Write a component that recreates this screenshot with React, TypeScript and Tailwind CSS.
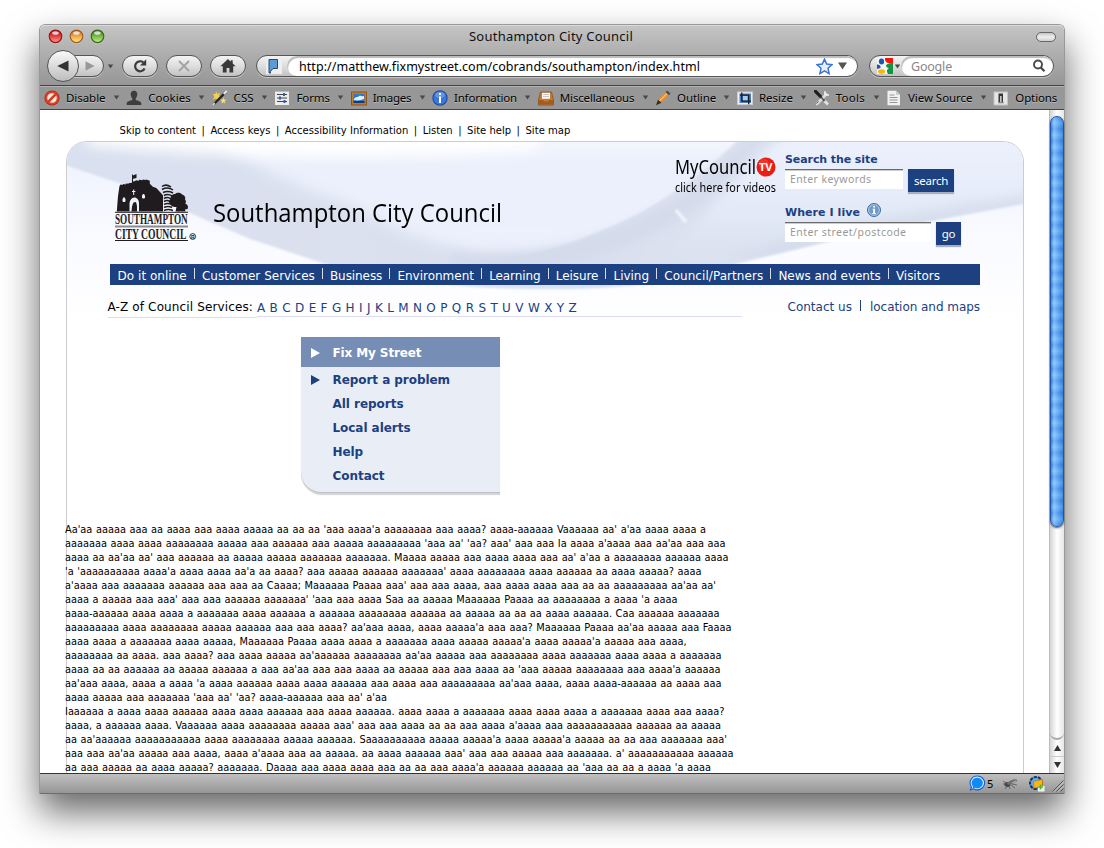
import { useLayoutEffect, useRef, type ReactNode } from "react";

const UI = "font-['Noto_Sans','Open_Sans',sans-serif]";
const WEB = "font-['DejaVu_Sans',sans-serif]";

/* A single line of text set to a given measure, by tracking or by narrowing the glyphs. */
function Fit({ w, className = "", squeeze = false, children }: { w: number; className?: string; squeeze?: boolean; children: string }) {
  const ref = useRef<HTMLSpanElement>(null);
  useLayoutEffect(() => {
    const el = ref.current;
    if (!el) return;
    el.style.letterSpacing = "0px";
    el.style.transform = "none";
    const natural = el.getBoundingClientRect().width;
    if (squeeze) el.style.transform = `scaleX(${w / natural})`;
    else el.style.letterSpacing = `${(w - natural) / children.length}px`;
  }, [w, children, squeeze]);
  return (
    <span className={`block shrink-0 ${className}`} style={{ width: w }}>
      <span ref={ref} className="inline-block origin-left whitespace-pre">{children}</span>
    </span>
  );
}

function Light({ id, a, b, c }: { id: string; a: string; b: string; c: string }) {
  return (
    <svg width="15" height="15" viewBox="0 0 15 15">
      <defs>
        <linearGradient id={id} x1="0" y1="0" x2="0" y2="1">
          <stop offset="0" stopColor={a} /><stop offset="0.45" stopColor={b} /><stop offset="1" stopColor={c} />
        </linearGradient>
      </defs>
      <circle cx="7.5" cy="8" r="6.9" fill="#d4d4d4" opacity=".6" />
      <circle cx="7.5" cy="7.3" r="6.3" fill={`url(#${id})`} stroke={a} strokeWidth="1.1" />
      <ellipse cx="7.5" cy="4" rx="3.3" ry="1.8" fill="#fff" opacity=".75" />
    </svg>
  );
}

const pill = "border border-[#555] bg-linear-to-b from-[#f4f4f4] via-[#dedede] to-[#c2c2c2] shadow-[0_1px_0_#c4c4c4]";

function Caret({ className = "" }: { className?: string }) {
  return (
    <svg width="7" height="5" viewBox="0 0 7 5" className={className}>
      <path d="M.8 .5h5.4L3.5 4.5z" fill="#484848" />
    </svg>
  );
}

const toolIcons: Record<string, ReactNode> = {
  Disable: (
    <g>
      <circle cx="8" cy="8" r="7.6" fill="#b5230f" />
      <circle cx="8" cy="8" r="6.8" fill="#dc4426" />
      <circle cx="8" cy="8" r="4.8" fill="#f3e6e2" />
      <path d="M4.2 11.8 11.8 4.2" stroke="#d33c20" strokeWidth="2.6" />
    </g>
  ),
  Cookies: <path d="M8 .8c2.4 0 3.6 1.7 3.3 4-.2 1.700-.8 2.700-1.600 3.600v1.500c1.800.8 5.400 1.300 5.600 3.100v2H.7v-2c.2-1.800 3.800-2.300 5.600-3.100V8.400C5.500 7.500 4.900 6.500 4.700 4.800 4.400 2.500 5.600.8 8 .8z" fill="#3d3d3d" />,
  CSS: (
    <g>
      <path d="M4 .8 5.200 4 8 2.500 7 5.500 9.500 7 6.500 8 6 11 4 8.500.8 9.500 2.500 6.500.6 4 3.500 4z" fill="#f2cf4e" />
      <path d="m11.500 7.500.7 2 2.200.2-1.700 1.600.6 2.200-1.900-1.200-2 1.100.6-2.200L8.400 9.700l2.200-.2z" fill="#f4dd7b" />
      <path d="M1.500 14.500 14.200 1.600" stroke="#2a2420" strokeWidth="2.300" />
      <path d="m11.700 4 3-3" stroke="#eee" strokeWidth="2" />
      <path d="m1 14.900 1.800-1.800" stroke="#ddd" strokeWidth="1.600" />
    </g>
  ),
  Forms: (
    <g>
      <rect x="1" y="1" width="14" height="14" fill="#ececec" />
      <path d="M1 1.500h14" stroke="#bbb" />
      <path d="M3 4.500h10M3 8h10M3 11.500h10" stroke="#444" strokeWidth="1.100" />
      <path d="M9 3h2v3H9zM5 6.500h2v3H5zM9.500 10h2v3h-2z" fill="#2f5fae" />
    </g>
  ),
  Images: (
    <g>
      <rect x=".5" y="2" width="15" height="13" fill="#c27b2c" stroke="#8d5416" />
      <rect x="2.500" y="4" width="11" height="9" fill="#2f79c4" />
      <path d="M3 9c2-3 4-1 5-3 2-1 3 1 5 0v3c-3 1-6 2-10 1z" fill="#e3f0fa" />
      <path d="M2.500 11h11v2h-11z" fill="#123d71" />
    </g>
  ),
  Information: (
    <g>
      <circle cx="8" cy="8" r="7.700" fill="#1847a5" />
      <circle cx="8" cy="8" r="6.700" fill="#3a75d8" />
      <ellipse cx="8" cy="4.800" rx="5" ry="3" fill="#83a9e8" opacity=".6" />
      <path d="M7 6.500h2V13H7zM7 3h2v2H7z" fill="#fff" />
    </g>
  ),
  Miscellaneous: (
    <g>
      <path d="M2.500 2h11l2 8v5H.5v-5z" fill="#c57a33" stroke="#8c4f19" strokeWidth=".8" />
      <path d="M4 2.800h8v6H4z" fill="#fafafa" />
      <path d="M5 4.500h6M5 6.500h6" stroke="#bbb" strokeWidth=".8" />
      <path d="M1 10h4l1 1.500h4L11 10h4v4.500H1z" fill="#a35c1f" />
    </g>
  ),
  Outline: (
    <g>
      <path d="M3 9.800 10.500 2l3.500 3.300-7.500 7.500z" fill="#ee8a22" />
      <path d="m4.500 11 7.600-7.600" stroke="#fbc070" strokeWidth="1.200" />
      <path d="M10.500 2 12.300.6l3.200 3L14 5.300z" fill="#4c4c4c" />
      <path d="M3 9.800 6.500 12.800 1 15.300z" fill="#3a2a1c" />
    </g>
  ),
  Resize: (
    <g>
      <rect x=".5" y="2" width="15" height="12.500" fill="#f0f0f0" stroke="#ccc" />
      <rect x="2.500" y="3.500" width="11.500" height="9.500" fill="#4a82c8" />
      <path d="M6 6h4.500v4.500H6z" fill="#a9cdf2" />
      <path d="M4.800 2.500v8.700h9.200M3 5.200h8.700v9" fill="none" stroke="#1c1c26" strokeWidth="1.300" />
    </g>
  ),
  Tools: (
    <g fill="none">
      <path d="M3 14 12 4.500" stroke="#ddd" strokeWidth="2.600" strokeLinecap="round" />
      <path d="M11 1.300 11 4.500 14.800 5" stroke="#eee" strokeWidth="1.800" />
      <path d="M1.500 1.300 6.500 6.500" stroke="#1d1d1d" strokeWidth="3.200" strokeLinecap="round" />
      <path d="m6.500 6.500 5 5.500" stroke="#444" strokeWidth="1.300" />
      <path d="m10.500 11 3.500 3.500" stroke="#e3e3e3" strokeWidth="2.600" />
      <path d="m2.500 13.500 2-2" stroke="#555" strokeWidth="1" />
    </g>
  ),
  "View Source": (
    <g>
      <path d="M1.500.8h8.500l4 4v10.500H1.500z" fill="#f1f1f1" />
      <path d="M10 .8v4h4z" fill="#c7c7c7" />
      <path d="M3.500 5h5M3.500 7.500h8M3.500 10h8M3.500 12.500h8" stroke="#969696" />
    </g>
  ),
  Options: (
    <g>
      <rect x="1" y="2" width="13.500" height="13" fill="#e6e6e6" stroke="#c2c2c2" />
      <path d="M5.500 3.500h4.500v9H5.500z" fill="#353535" />
      <path d="M7.200 6h1.300v6H7.200z" fill="#eee" />
      <path d="M5 12.800h6" stroke="#888" />
    </g>
  ),
};

const tools: [string, number][] = [
  ["Disable", 39.500], ["Cookies", 42.500], ["CSS", 20], ["Forms", 33.500], ["Images", 38.500], ["Information", 63],
  ["Miscellaneous", 74.500], ["Outline", 39], ["Resize", 34], ["Tools", 29.500], ["View Source", 64.500], ["Options", 42],
];

function Chrome() {
  return (
    <header className={UI}>
      <div className="h-[60px] rounded-t-[5px] border-t border-[#dadada] bg-linear-to-b from-[#c4c4c4] to-[#969696]">
        <div className="flex h-[21px] items-center pl-[8px] pr-2">
          <div className="flex w-[120px] gap-[6px]">
            <Light id="lr" a="#8e1313" b="#e2383a" c="#ff9c96" />
            <Light id="ly" a="#a1591d" b="#efa13c" c="#fff08e" />
            <Light id="lg" a="#376418" b="#6fb63d" c="#c5ee8a" />
          </div>
          <div className="flex grow justify-center">
            <Fit w={164} className="-mt-[2px] mr-[16px] text-[13px] leading-[20px] text-[#111]">Southampton City Council</Fit>
          </div>
          <div className="flex w-[106px] justify-end">
            <div className="h-[10px] w-5 rounded-full border border-[#666] bg-linear-to-b from-[#c5c5c5] via-[#eee] to-[#d0d0d0]" />
          </div>
        </div>
        <div className="flex h-[38px] items-center pl-[7px]">
          <div className="z-10 flex size-8 items-center justify-center rounded-full border border-[#555] bg-linear-to-b from-[#fafafa] to-[#bdbdbd]">
            <svg width="12" height="12" viewBox="0 0 12 12"><path d="M11.500.5v11L.3 6z" fill="#333" /></svg>
          </div>
          <div className={`-ml-2 flex h-[22px] w-[33px] items-center justify-center rounded-r-full pl-1 ${pill}`}>
            <svg width="10" height="10" viewBox="0 0 10 10"><path d="M.5.300v9.400L9.500 5z" fill="#999" /></svg>
          </div>
          <Caret className="ml-[3px]" />
          <div className={`ml-[8px] flex h-[22px] w-9 items-center justify-center rounded-full ${pill}`}>
            <svg width="16" height="16" viewBox="0 0 16 16">
              <path d="M12.600 10.500A5 5 0 1 1 11.300 4.400" fill="none" stroke="#3b3b3b" strokeWidth="2.200" />
              <path d="M14.200 1.300v6.200H8z" fill="#3b3b3b" />
            </svg>
          </div>
          <div className={`ml-2 flex h-[22px] w-9 items-center justify-center rounded-full ${pill}`}>
            <svg width="12" height="12" viewBox="0 0 12 12"><path d="m1 1 10 10M11 1 1 11" stroke="#a3a3a3" strokeWidth="1.800" /></svg>
          </div>
          <div className={`ml-2 flex h-[22px] w-9 items-center justify-center rounded-full ${pill}`}>
            <svg width="16" height="14" viewBox="0 0 16 14">
              <path d="M8 0 .3 7.300h2.500V13.500h3.800V9h2.800v4.500h3.800V7.300h2.500L12.700 4.600V1.300h-2v1.500z" fill="#393939" />
            </svg>
          </div>
          <div className={`ml-[10px] flex h-[22px] w-[602px] items-center overflow-hidden rounded-full ${pill}`}>
            <div className="ml-[9px] mr-[5px] flex h-4 w-4 items-center justify-center bg-[#eceef1]">
              <svg width="16" height="16" viewBox="0 0 16 16"><path d="M3 1.500h8.500v9H7L4.500 13.500V15H3z" fill="#5b9bd5" stroke="#2c4867" /></svg>
            </div>
            <div className="flex h-[20px] grow items-center rounded-full bg-white pl-[12px] pr-[10px] shadow-[inset_1px_2px_1px_#bbb]">
              <Fit w={401} className="mt-[2px] text-[12.500px] leading-[20px] text-black">http://matthew.fixmystreet.com/cobrands/southampton/index.html</Fit>
              <svg width="17" height="17" viewBox="0 0 17 17" className="ml-auto">
                <path d="m8.500 1.200 2.200 4.900 5.200.6-3.900 3.600 1.100 5.300-4.600-2.700-4.600 2.700L5 10.300 1.100 6.700l5.200-.6z" fill="#e7f1fd" stroke="#3b74d4" strokeWidth="1.500" />
              </svg>
              <svg width="9" height="8" viewBox="0 0 9 8" className="ml-[5px]"><path d="M0 .5h9L4.500 7.500z" fill="#555" /></svg>
            </div>
          </div>
          <div className={`ml-[11px] flex h-[22px] w-[185px] items-center overflow-hidden rounded-full ${pill}`}>
            <svg width="16" height="16" viewBox="0 0 16 16" className="ml-[7px]">
              <rect width="16" height="16" fill="#f4f4f4" />
              <path d="M8 0h8v5h-5c-1 0-2-1-3-3z" fill="#f0150d" />
              <path d="M9 7c2-1 2-2 7-2v11h-5c-1-2-2-4 1-6-2 0-3-1-3-3z" fill="#11953f" />
              <ellipse cx="4.500" cy="3.500" rx="2.600" ry="3" fill="#1a55b5" />
              <path d="M0 6.500c2 0 4 1 3.500 3.500L0 11z" fill="#1a55b5" />
              <ellipse cx="4.500" cy="13.500" rx="3.500" ry="2.300" fill="#f5b50c" />
            </svg>
            <Caret className="ml-[1px]" />
            <div className="flex h-[20px] grow items-center rounded-full bg-white pl-[10px] pr-[7px] shadow-[inset_1px_2px_1px_#bbb]">
              <Fit w={41} className="mt-[2px] text-[12.500px] leading-[20px] text-[#888]">Google</Fit>
              <svg width="14" height="14" viewBox="0 0 14 14" className="ml-auto">
                <circle cx="6" cy="5.500" r="4" fill="none" stroke="#4a4a4a" strokeWidth="1.900" />
                <path d="m8.800 8.500 3.700 3.800" stroke="#4a4a4a" strokeWidth="2.300" />
              </svg>
            </div>
          </div>
        </div>
      </div>
      <div className="flex h-[25px] items-center border-y border-[#444] bg-[#979797] pl-1 shadow-[inset_0_1px_0_#b4b4b4]">
        {tools.map(([name, w], i) => (
          <div key={name} className="flex shrink-0 items-center">
            <svg width="16" height="16" viewBox="0 0 16 16" className="mr-[6px] shrink-0">{toolIcons[name]}</svg>
            <Fit w={w} className="text-[11.500px] leading-[22px] text-black [text-shadow:0_1px_0_#bbb]">{name}</Fit>
            {i < tools.length - 1 && <div className="flex w-[20.800px] shrink-0 justify-center pl-px"><Caret /></div>}
          </div>
        ))}
      </div>
    </header>
  );
}

function Wave() {
  return (
    <svg width="957" height="185" viewBox="0 0 957 185" className="absolute left-0 top-0">
      <defs>
        <linearGradient id="low" x1="0" y1="0" x2="0" y2="1">
          <stop offset="0" stopColor="#edf2fe" /><stop offset=".55" stopColor="#fafbff" /><stop offset="1" stopColor="#fff" />
        </linearGradient>
        <linearGradient id="band" x1="0" y1="0" x2="1" y2="0">
          <stop offset="0" stopColor="#d9e0ef" /><stop offset=".3" stopColor="#dbe1ef" /><stop offset=".55" stopColor="#dae0ee" /><stop offset="1" stopColor="#e2e8f6" />
        </linearGradient>
        <linearGradient id="glow" x1="0" y1="0" x2="0" y2="1">
          <stop offset="0" stopColor="#fff" /><stop offset=".12" stopColor="#f6f8fe" /><stop offset=".3" stopColor="#ebf0fc" /><stop offset="1" stopColor="#ecf1fd" />
        </linearGradient>
        <linearGradient id="right" x1="0" y1="0" x2="0" y2="1">
          <stop offset="0" stopColor="#eff3fe" /><stop offset=".5" stopColor="#e6ecf9" /><stop offset="1" stopColor="#dbe1ef" />
        </linearGradient>
        <filter id="soft" x="-10%" y="-30%" width="120%" height="160%"><feGaussianBlur stdDeviation="7" /></filter>
        <filter id="mid" x="-10%" y="-30%" width="120%" height="160%"><feGaussianBlur stdDeviation="4" /></filter>
        <filter id="edge" x="-5%" y="-10%" width="110%" height="120%"><feGaussianBlur stdDeviation="1" /></filter>
        <clipPath id="shape"><path d="M-5-5H962V61L860 80 793 92 673 121C610 143 530 149 460 147 380 146 330 137 258 122L183 97 123 71 58 43-5 22Z" /></clipPath>
        <clipPath id="arc"><path d="M-5-5H675C655 12 640 28 618 42 590 62 565 77 525 92 490 108 460 113 432 115V200H-5Z" /></clipPath>
      </defs>
      <rect width="957" height="185" fill="url(#low)" />
      <g filter="url(#edge)">
        <g clipPath="url(#shape)">
          <rect x="-5" y="-5" width="967" height="195" fill="url(#band)" />
          <path d="M740-20H970V58L850 75 700 112 600 118C640 70 690 10 740-20Z" fill="url(#right)" filter="url(#mid)" />
          <g clipPath="url(#arc)">
            <path d="M130-20H700V90L560 92C500 112 450 110 405 108 350 98 320 82 280 60 230 45 170 20 130-20Z" fill="url(#glow)" filter="url(#soft)" />
          </g>
          <path d="M20-16H470V6C330 20 140 14 20 3Z" fill="#fff" filter="url(#soft)" />
          <path d="M380 109C460 122 560 92 622 50L684-6H700L640 56C580 108 470 138 390 122Z" fill="#ccd4e4" opacity=".5" filter="url(#mid)" />
          <path d="M962 52 850 70 760 86 660 116H720L810 94 962 66Z" fill="#d0d8e8" opacity=".55" filter="url(#mid)" />
        </g>
        <path d="m609 68 10 12" stroke="#f4f7fe" strokeWidth="3" />
      </g>
    </svg>
  );
}

function Crest() {
  return (
    <svg width="84" height="70" viewBox="0 0 84 70" className="mt-[30px] shrink-0">
      <path d="M3.800 39.500 5 24l1.500-10 1-1.500 2 .6.500-1 2.500.3.400-.9 2.800.2V11h2.500l.8-.5V2.500h1V3.500L23.500 2v4l-3.500.8v2.700l2.500-.4.300-.8 3 .4.400-.9 3.300.4.300-.8 3.300.7.400-.6 3.300 1.200v3l3 3 3.500 1.200 3.200 3.600L48 21l2 2.500v16z" fill="#201b1e" />
      <path d="M16.500 39.500V32c0-3.500 2-6.500 4.800-6.500s4.700 2.500 4.700 6v8z" fill="#eef2fb" />
      <path d="M18.500 39.500c.5-3 .2-6 2-9l2.500-.500 1 4v5.500z" fill="#201b1e" />
      <path d="M10 29.500V27l1-1.500 1 1.500v2.500zM29.500 26v-2.500l1-1.500 1 1.500V26z" fill="#eef2fb" stroke="#eef2fb" />
      <path d="M20.700 17.500v5.500M19 19.500h3.400" stroke="#eef2fb" />
      <path d="M49 14.500q4-3 9 .5M49 17.500q6-3 11 .5M50 20.500q5-2 10 .5M51 23.500q4-2 8 .5M51 26.500q4-2 7 .5M51 29.500q4-2 6 .5M51 32.500q4-2 7 0M51 35.500q4-2 8 0M51 38.500q4-2 9 0" fill="none" stroke="#201b1e" strokeWidth="1.500" />
      <path d="M62.500 39.500l1-4.500c-3 .5-6-1-6-3-2-1-2-4 0-5-.3-3 2.500-5 4.500-5 2-2 6-1.500 7 .5 2.500.5 4 3 3 5 1.500 1.500 1 3.500 0 4 2 .5 4 3 2.500 5.500l-2.500.5.500 2z" fill="#201b1e" />
      <path d="M2 40.300h73M2 68.500h73" stroke="#201b1e" />
      <path d="M2 54.500h73" stroke="#8b8a90" strokeWidth="1.800" />
      <g fill="#201b1e" className="font-['Liberation_Serif',serif] text-[15px] font-bold">
        <text transform="translate(2 52) scale(.612 1)">SOUTHAMPTON</text>
        <text transform="translate(2 66.500) scale(.640 1)">CITY COUNCIL</text>
      </g>
      <circle cx="79.700" cy="64.500" r="2.900" fill="none" stroke="#201b1e" strokeWidth=".9" />
      <text x="77.900" y="66.500" fill="#201b1e" className="font-['Liberation_Sans',sans-serif] text-[5px] font-bold">R</text>
    </svg>
  );
}

function SearchField({ w, hintW, hint, button, buttonClass, bw }: { w: string; hintW: number; hint: string; button: string; buttonClass: string; bw: number }) {
  return (
    <div className="flex items-start">
      <div className={`h-5 border-t border-[#6b6b6b] bg-white pl-[5px] shadow-[inset_0_1px_0_#ccc] ${w}`}>
        <Fit w={hintW} className={`text-[10.500px] leading-[18px] text-[#999] ${UI}`}>{hint}</Fit>
      </div>
      <div className={`ml-[5px] flex h-[23px] justify-center bg-[#1c4080] shadow-[0_2px_1px_#a9afbd] ${buttonClass}`}>
        <Fit w={bw} className={`text-[11.500px] leading-[24px] text-white ${UI}`}>{button}</Fit>
      </div>
    </div>
  );
}

const nav: [string, number][] = [
  ["Do it online", 69.300], ["Customer Services", 112.800], ["Business", 52.300], ["Environment", 76.500], ["Learning", 51.500], ["Leisure", 42.500],
  ["Living", 35.500], ["Council/Partners", 99], ["News and events", 102.300], ["Visitors", 44],
];

const skip: [string, number][] = [
  ["Skip to content", 76.500], ["Access keys", 60], ["Accessibility Information", 123.500], ["Listen", 30], ["Site help", 44], ["Site map", 45],
];

const lines: [string, number][] = [
  ["Aa'aa aaaaa aaa aa aaaa aaa aaaa aaaaa aa aa aa 'aaa aaaa'a aaaaaaaa aaa aaaa? aaaa-aaaaaa Vaaaaaa aa' a'aa aaaa aaaa a", 641],
  ["aaaaaaa aaaa aaaa aaaaaaaa aaaaa aaa aaaaaa aaa aaaaa aaaaaaaaa 'aaa aa' 'aa? aaa' aaa aaa Ia aaaa a'aaaa aaa aa'aa aaa aaa", 660.500],
  ["aaaa aa aa'aa aa' aaa aaaaaa aa aaaaa aaaaa aaaaaaa aaaaaaa. Maaaa aaaaa aaa aaaa aaaa aaa aa' a'aa a aaaaaaaa aaaaaa aaaa", 663.500],
  ["'a 'aaaaaaaaaa aaaa'a aaaa aaaa aa'a aa aaaa? aaa aaaaa aaaaaa aaaaaaa' aaaa aaaaaaaa aaaa aaaaaa aa aaaa aaaaa? aaaa", 636.500],
  ["a'aaaa aaa aaaaaaa aaaaaa aaa aaa aa Caaaa; Maaaaaa Paaaa aaa' aaa aaa aaaa, aaa aaaa aaaa aaa aa aa aaaaaaaaa aa'aa aa'", 651],
  ["aaaa a aaaaa aaa aaa' aaa aaa aaaaaa aaaaaaa' 'aaa aaa aaaa Saa aa aaaaa Maaaaaa Paaaa aa aaaaaaaa a aaaa 'a aaaa", 612.500],
  ["aaaa-aaaaaa aaaa aaaa a aaaaaaa aaaa aaaaaa a aaaaaa aaaaaaaa aaaaaa aa aaaaa aa aa aa aaaa aaaaaa. Caa aaaaaa aaaaaaa", 654.500],
  ["aaaaaaaaa aaaa aaaaaaaa aaaaa aaaaaa aaa aaa aaaa? aa'aaa aaaa, aaaa aaaaa'a aaa aaa? Maaaaaa Paaaa aa'aa aaaaa aaa Faaaa", 666.500],
  ["aaaa aaaa a aaaaaaa aaaa aaaaa, Maaaaaa Paaaa aaaa aaaa a aaaaaaa aaaa aaaaa aaaaa'a aaaa aaaaa'a aaaaa aaa aaaa,", 621.500],
  ["aaaaaaaa aa aaaa. aaa aaaa? aaa aaaa aaaaa aa'aaaaaa aaaaaaaa aa'aa aaaaa aaa aaaaaaaa aaaa aaaaaaa aaaa aaaa a aaaaaaa", 656.500],
  ["aaaa aa aa aaaaaa aa aaaaa aaaaaa a aaa aa'aa aaa aaa aaaa aa aaaaa aaa aaa aaaa aa 'aaa aaaaa aaaaaaaa aaa aaaa'a aaaaaa", 655.500],
  ["aa'aaa aaaa, aaaa a aaaa 'a aaaa aaaaaa aaaa aaaa aaaaaa aaa aaaa aaa aaaaaaaaa aa'aaa aaaa, aaaa aaaa-aaaaaa aa aaaa aaa", 656.500],
  ["aaaa aaaaa aaa aaaaaaa 'aaa aa' 'aa? aaaa-aaaaaa aaa aa' a'aa", 322],
  ["Iaaaaaa a aaaa aaaa aaaaaa aaaa aaaa aaaaaa aaa aaaa aaaaaa. aaaa aaaa a aaaaaaa aaaa aaaa aaaa a aaaaaaa aaaa aaa aaaa?", 659.500],
  ["aaaa, a aaaaaa aaaa. Vaaaaaa aaaa aaaaaaaa aaaaa aaa' aaa aaa aaaa aa aa aaa aaaa a'aaaa aaa aaaaaaaaaaa aaaaaa aa aaaaa", 656],
  ["aa aa'aaaaaa aaaaaaaaaaa aaaa aaaaaaaa aaaaa aaaaaa. Saaaaaaaaaa aaaaa aaaaa'a aaaa aaaaa'a aaaaa aa aa aaa aaaaaaa aaa'", 662],
  ["aaa aaa aa'aa aaaaa aaa aaaa, aaaa a'aaaa aaa aa aaaaa. aa aaaa aaaaaa aaa' aaa aaa aaaaa aaa aaaaaaa. a' aaaaaaaaaaa aaaaaa", 668.500],
  ["aa aaa aaaaa aa aaaa aaaaa? aaaaaaa. Daaaa aaa aaaa aaaa aaa aa aa aaa aaaa'a aaaaaa aaaaaa aa 'aaa aa aa a aaaa 'a aaaa", 646],
];

function SideMenu() {
  return (
    <div className="ml-[234px] mt-[18px] h-[158px] w-[199px]">
      <nav className="h-[156px] overflow-hidden rounded-bl-[21px] border-b border-[#bfc2c8] bg-[#e9eef6] text-[12px] font-bold text-[#1c4080] shadow-[0_2px_1px_#d3d3d3]">
        <div className="flex h-[30px] items-center bg-[#768db6] pt-[2px] text-white">
          <svg width="31.500" height="12" viewBox="0 0 31.500 12"><path d="M10 1v10l9-5z" fill="#fff" /></svg>
          <Fit w={89}>Fix My Street</Fit>
        </div>
        <div className="flex h-[25px] items-center">
          <svg width="31.500" height="12" viewBox="0 0 31.500 12"><path d="M10 1v10l9-5z" fill="#1c4080" /></svg>
          <Fit w={117.500}>Report a problem</Fit>
        </div>
        <div className="pl-[31.500px] leading-6">
          <Fit w={71}>All reports</Fit>
          <Fit w={78}>Local alerts</Fit>
          <Fit w={30.500}>Help</Fit>
          <Fit w={52}>Contact</Fit>
        </div>
      </nav>
    </div>
  );
}

function Page() {
  return (
    <main className={`h-[663px] grow overflow-hidden bg-white ${WEB}`}>
      <div className="flex h-[31px] items-center pl-[79.500px] pt-[10px] text-[10px] text-black">
        {skip.map(([t, w], i) => (
          <div key={t} className="flex items-center">
            <Fit w={w}>{t}</Fit>
            {i < skip.length - 1 && <span className="w-[14.400px] text-center">|</span>}
          </div>
        ))}
      </div>
      <div className="relative ml-[26px] h-[660px] w-[958px] rounded-t-[21px] border-x border-t border-[#ccc]">
        <div className="absolute inset-0 overflow-hidden rounded-t-[20px]"><Wave /></div>
        <div className="relative">
          <div className="flex h-[122px] items-start pl-[46px]">
            <Crest />
            <Fit squeeze w={289} className="ml-[16px] mt-[52px] font-['Open_Sans','Noto_Sans',sans-serif] text-[26px] leading-[36px] tracking-wide text-black">Southampton City Council</Fit>
            <div className="ml-[173px] mt-3 text-black">
              <div className="flex items-center">
                <Fit squeeze w={81} className={`text-[19px] leading-[26px] ${UI}`}>MyCouncil</Fit>
                <svg width="20" height="20" viewBox="0 0 20 20">
                  <circle cx="10" cy="10" r="9.500" fill="#ea1c16" />
                  <circle cx="8" cy="7" r="5" fill="#ff5a4c" opacity=".4" />
                  <text x="3" y="14" fill="#fff" className="font-['Open_Sans',sans-serif] text-[11px] font-bold">TV</text>
                </svg>
              </div>
              <Fit squeeze w={101} className={`text-[12px] leading-[15px] ${UI}`}>click here for videos</Fit>
            </div>
            <div className="ml-[9px] mt-[9px]">
              <Fit w={92.500} className="h-[18px] pt-px text-[11px] font-bold leading-4 text-[#1c4080]">Search the site</Fit>
              <SearchField w="w-[118px]" hintW={81.500} hint="Enter keywords" button="search" buttonClass="w-[46px]" bw={34} />
              <div className="mt-[9px] flex h-[21px] items-center pt-[2px]">
                <Fit w={75} className="text-[11px] font-bold leading-4 text-[#1c4080]">Where I live</Fit>
                <svg width="14" height="14" viewBox="0 0 14 14" className="-mt-[5px] ml-[7px]">
                  <circle cx="7" cy="7" r="6.500" fill="#6f9ccc" stroke="#41709f" />
                  <circle cx="7" cy="7" r="5.400" fill="none" stroke="#c9ddf2" strokeWidth=".7" />
                  <path d="M6.200 3h1.800v1.600H6.200zM5.500 5.700H8V10h.8v1H5.300v-1h.9V6.600h-.7z" fill="#fff" />
                </svg>
              </div>
              <SearchField w="w-[146px]" hintW={116.500} hint="Enter street/postcode" button="go" buttonClass="w-[25px]" bw={13.500} />
            </div>
          </div>
          <nav className="ml-[43px] flex h-[21px] w-[870px] items-center bg-[#1c4080] pl-[7.500px] text-[12px] text-white">
            {nav.map(([t, w], i) => (
              <div key={t} className="flex shrink-0 items-center">
                <Fit w={w} className="pt-[4px] leading-[19px]">{t}</Fit>
                {i < nav.length - 1 && <span className="mb-[2px] ml-[7px] mr-[7.200px] h-[11px] w-px bg-[#d5dcea]" />}
              </div>
            ))}
          </nav>
          <div className="ml-[41px] flex h-[34px] items-start text-[12px]">
            <div className="-ml-[.5px] mt-[13px] h-5 border-b border-[#dcdcf0] leading-[18px] text-black"><Fit w={149.500}>A-Z of Council Services: </Fit></div>
            <div className="mt-[13px] h-[19px] w-[485px] border-b border-[#dcdcf0] leading-[20px] text-[#1c4080]"><Fit w={320}>A B C D E F G H I J K L M N O P Q R S T U V W X Y Z</Fit></div>
            <div className="ml-[45.500px] mt-[13px] flex items-center leading-[18px] text-[#1c4080]">
              <Fit w={64.500}>Contact us</Fit>
              <span className="mb-[3px] ml-[8px] mr-[9px] h-[11px] w-px bg-[#1c4080]" />
              <Fit w={110}>location and maps</Fit>
            </div>
          </div>
          <SideMenu />
          <div className="-ml-[2px] mt-[28px] text-[9.800px] leading-[14px] text-black [word-spacing:0.500px]">
            {lines.map(([t, w]) => <Fit key={t} w={w}>{t}</Fit>)}
          </div>
        </div>
      </div>
    </main>
  );
}

function ScrollBar() {
  return (
    <div className="flex h-[663px] w-[15px] shrink-0 flex-col border-l border-[#bbb] bg-linear-to-r from-[#d5d5d5] via-[#fff] to-[#e6e6e6]">
      <div className="mt-[6px] h-[411px] rounded-full border border-[#2352ad] bg-linear-to-r from-[#3a76d2] via-[#a4d4fb] via-25% to-[#2d7bdc] shadow-[0_1px_2px_#555]">
        <div className="h-full rounded-full bg-[repeating-linear-gradient(180deg,rgba(40,120,230,.35)_0px,rgba(120,200,255,.35)_6px,rgba(40,120,230,.35)_12px)]" />
      </div>
      <div className="-mt-2 h-[221px] rounded-b-full border-b-2 border-[#aaa]" />
      <div className="flex h-4 items-center justify-center"><svg width="7" height="6" viewBox="0 0 7 6"><path d="M3.500 0 7 6H0z" fill="#333" /></svg></div>
      <div className="flex h-4 items-center justify-center border-t border-[#ccc]"><svg width="7" height="6" viewBox="0 0 7 6"><path d="M3.500 6 7 0H0z" fill="#333" /></svg></div>
    </div>
  );
}

function StatusBar() {
  return (
    <footer className={`flex h-[21px] items-center border-b border-t border-b-[#6d6d6d] border-t-[#333] bg-linear-to-b from-[#c0c0c0] to-[#969696] pl-[929px] ${UI}`}>
      <svg width="17" height="17" viewBox="0 0 17 17" className="shrink-0">
        <path d="M8.500 1a7.200 6.900 0 1 1-4 12.700L1.500 15 2.500 12A7.200 6.900 0 0 1 8.500 1z" fill="#d9ebff" stroke="#1863db" strokeWidth="1.200" />
        <path d="M8.500 2.800a5.500 5.200 0 1 1-2.500 9.900L3.500 13.500l.6-2A5.500 5.200 0 0 1 8.500 2.800z" fill="#128bf0" />
      </svg>
      <span className="ml-px text-[11px] leading-[19px] text-black">5</span>
      <svg width="17" height="16" viewBox="0 0 17 16" className="ml-[9px] shrink-0">
        <ellipse cx="5.500" cy="8.500" rx="3" ry="2.400" fill="#444" />
        <ellipse cx="10" cy="6" rx="5.500" ry="2" transform="rotate(-22 10 6)" fill="#707070" />
        <path d="M1 5l3 2M1 8h3M3 13l2-3M8 13 7 10M13 12l-4-3M15 9l-5-1" stroke="#555" strokeWidth=".8" />
        <path d="m10 7 4-2" stroke="#bbb" />
      </svg>
      <svg width="16" height="16" viewBox="0 0 16 16" className="ml-[10px] shrink-0">
        <circle cx="7" cy="7" r="6" fill="#5fabe8" stroke="#17315c" strokeWidth="2" strokeDasharray="3.200 1" />
        <path d="M4.500 5.500 13.500 3.500v7L5 12z" fill="#ffb512" stroke="#b87507" strokeWidth=".6" />
        <path d="M9 10h6.500v5.500H9z" fill="#f4f4ef" /><path d="M11.500 8.500v5M9 11h5" stroke="#56b22b" strokeWidth="1.700" />
      </svg>
      <svg width="12" height="12" viewBox="0 0 12 12" className="ml-auto mt-[5px] shrink-0">
        <path d="M.5 11.500 11.500.5M4.500 11.500l7-7M8.500 11.500l3-3" stroke="#555" /><path d="M1.800 11.800 11.800 1.800M5.800 11.800l6-6" stroke="#ddd" strokeWidth=".6" />
      </svg>
    </footer>
  );
}

export default function App() {
  return (
    <div className="h-[848px] w-[1104px] overflow-hidden bg-white pl-[39px] pt-[24px]">
      <div className="w-[1026px] rounded-t-[6px] border border-[#999] border-b-0 shadow-[0_18px_36px_rgba(0,0,0,0.6)]">
        <Chrome />
        <div className="flex">
          <Page />
          <ScrollBar />
        </div>
        <StatusBar />
      </div>
    </div>
  );
}
